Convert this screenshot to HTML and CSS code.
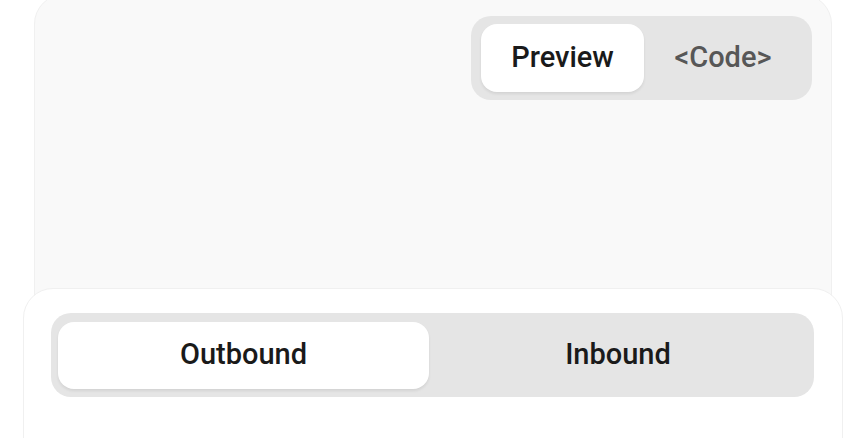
FILE: index.html
```html
<!DOCTYPE html>
<html lang="en">
<head>
  <meta charset="UTF-8" />
  <meta name="viewport" content="width=device-width, initial-scale=1.0"/>
  <title>Preview</title>
  <link rel="stylesheet" href="styles.css">
</head>
<body>

<div class="stage">
  <div class="preview-card">
    <div class="view-switch">
      <button class="view-tab active">Preview</button>
      <button class="view-tab">&lt;Code&gt;</button>
    </div>
  </div>

  <div class="direction-card">
    <div class="direction-switch">
      <button class="direction-tab active">Outbound</button>
      <button class="direction-tab">Inbound</button>
    </div>
  </div>
</div>

</body>
</html>
```

FILE: styles.css
```css
* {
  box-sizing: border-box;
}
body {
  margin: 0;
  font-family: Roboto, "Liberation Sans", Arial, sans-serif;
  background: #fff;
  overflow: hidden;
}
.stage {
  height: 438px;
  overflow: hidden;
  padding: 0 21px 0 23px;
}
button {
  font-family: inherit;
  border: none;
  background: none;
  cursor: pointer;
}
.preview-card {
  margin: -6px 11px 0 11px;
  height: 334px;
  padding: 21px 19px 0 0;
  background: #f9f9f9;
  border: 1px solid #f0f0f0;
  border-radius: 30px;
  display: flex;
  justify-content: flex-end;
  align-items: flex-start;
}
.view-switch {
  display: flex;
  padding: 8px 10px;
  background: #e5e5e5;
  border-radius: 20px;
}
.view-tab {
  height: 68px;
  width: 158px;
  padding: 0 0 2px;
  font-size: 29px;
  font-weight: 500;
  color: #575757;
  border-radius: 16px;
}
.view-tab.active {
  width: 163px;
  background: #fff;
  color: #1a1a1a;
  box-shadow: 0 2px 3px rgba(0,0,0,0.08);
}
.direction-card {
  position: relative;
  margin-top: -40px;
  height: 240px;
  padding: 24px 28px 0 27px;
  background: #fff;
  border: 1px solid #f0f0f0;
  border-radius: 30px;
}
.direction-switch {
  display: flex;
  padding: 9px 7px 8px 7px;
  background: #e5e5e5;
  border-radius: 20px;
}
.direction-tab {
  flex: 1;
  height: 67px;
  padding: 0 0 3px;
  font-size: 29px;
  font-weight: 500;
  color: #1a1a1a;
  border-radius: 16px;
}
.direction-tab.active {
  flex: 0 0 371px;
  background: #fff;
  box-shadow: 0 2px 3px rgba(0,0,0,0.08);
}
```
